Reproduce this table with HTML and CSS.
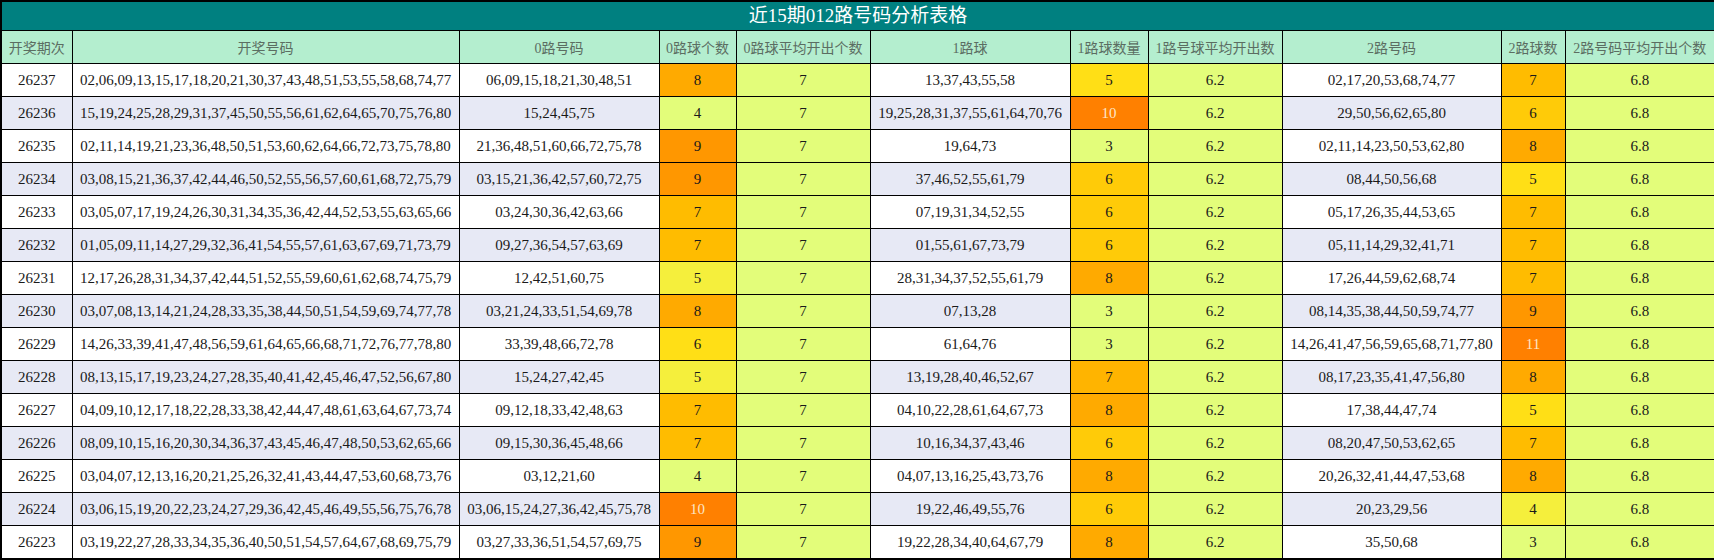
FILE: index.html
```html
<!DOCTYPE html>
<html lang="zh-CN">
<head>
<meta charset="utf-8">
<title>近15期012路号码分析表格</title>
<link rel="stylesheet" href="styles.css">
</head>
<body>
<table class="grid">
  <colgroup>
    <col class="w-period"><col class="w-nums"><col class="w-r0"><col class="w-c0"><col class="w-a0"><col class="w-r1"><col class="w-c1"><col class="w-a1"><col class="w-r2"><col class="w-c2"><col class="w-a2">
  </colgroup>
  <thead>
    <tr class="title-row"><th colspan="11" class="title">近15期012路号码分析表格</th></tr>
    <tr class="head-row">
      <th>开奖期次</th><th>开奖号码</th><th>0路号码</th><th>0路球个数</th><th>0路球平均开出个数</th><th>1路球</th><th>1路球数量</th><th>1路号球平均开出数</th><th>2路号码</th><th>2路球数</th><th>2路号码平均开出个数</th>
    </tr>
  </thead>
  <tbody>
    <tr><td>26237</td><td>02,06,09,13,15,17,18,20,21,30,37,43,48,51,53,55,58,68,74,77</td><td>06,09,15,18,21,30,48,51</td><td class="o2">8</td><td class="avg">7</td><td>13,37,43,55,58</td><td class="y2">5</td><td class="avg">6.2</td><td>02,17,20,53,68,74,77</td><td class="o1">7</td><td class="avg">6.8</td></tr>
    <tr class="alt"><td>26236</td><td>15,19,24,25,28,29,31,37,45,50,55,56,61,62,64,65,70,75,76,80</td><td>15,24,45,75</td><td class="lime">4</td><td class="avg">7</td><td>19,25,28,31,37,55,61,64,70,76</td><td class="o4">10</td><td class="avg">6.2</td><td>29,50,56,62,65,80</td><td class="y3">6</td><td class="avg">6.8</td></tr>
    <tr><td>26235</td><td>02,11,14,19,21,23,36,48,50,51,53,60,62,64,66,72,73,75,78,80</td><td>21,36,48,51,60,66,72,75,78</td><td class="o3">9</td><td class="avg">7</td><td>19,64,73</td><td class="lime">3</td><td class="avg">6.2</td><td>02,11,14,23,50,53,62,80</td><td class="o2">8</td><td class="avg">6.8</td></tr>
    <tr class="alt"><td>26234</td><td>03,08,15,21,36,37,42,44,46,50,52,55,56,57,60,61,68,72,75,79</td><td>03,15,21,36,42,57,60,72,75</td><td class="o3">9</td><td class="avg">7</td><td>37,46,52,55,61,79</td><td class="y3">6</td><td class="avg">6.2</td><td>08,44,50,56,68</td><td class="y2">5</td><td class="avg">6.8</td></tr>
    <tr><td>26233</td><td>03,05,07,17,19,24,26,30,31,34,35,36,42,44,52,53,55,63,65,66</td><td>03,24,30,36,42,63,66</td><td class="o1">7</td><td class="avg">7</td><td>07,19,31,34,52,55</td><td class="y3">6</td><td class="avg">6.2</td><td>05,17,26,35,44,53,65</td><td class="o1">7</td><td class="avg">6.8</td></tr>
    <tr class="alt"><td>26232</td><td>01,05,09,11,14,27,29,32,36,41,54,55,57,61,63,67,69,71,73,79</td><td>09,27,36,54,57,63,69</td><td class="o1">7</td><td class="avg">7</td><td>01,55,61,67,73,79</td><td class="y3">6</td><td class="avg">6.2</td><td>05,11,14,29,32,41,71</td><td class="o1">7</td><td class="avg">6.8</td></tr>
    <tr><td>26231</td><td>12,17,26,28,31,34,37,42,44,51,52,55,59,60,61,62,68,74,75,79</td><td>12,42,51,60,75</td><td class="y1">5</td><td class="avg">7</td><td>28,31,34,37,52,55,61,79</td><td class="o2">8</td><td class="avg">6.2</td><td>17,26,44,59,62,68,74</td><td class="o1">7</td><td class="avg">6.8</td></tr>
    <tr class="alt"><td>26230</td><td>03,07,08,13,14,21,24,28,33,35,38,44,50,51,54,59,69,74,77,78</td><td>03,21,24,33,51,54,69,78</td><td class="o2">8</td><td class="avg">7</td><td>07,13,28</td><td class="lime">3</td><td class="avg">6.2</td><td>08,14,35,38,44,50,59,74,77</td><td class="o3">9</td><td class="avg">6.8</td></tr>
    <tr><td>26229</td><td>14,26,33,39,41,47,48,56,59,61,64,65,66,68,71,72,76,77,78,80</td><td>33,39,48,66,72,78</td><td class="y2">6</td><td class="avg">7</td><td>61,64,76</td><td class="lime">3</td><td class="avg">6.2</td><td>14,26,41,47,56,59,65,68,71,77,80</td><td class="o4">11</td><td class="avg">6.8</td></tr>
    <tr class="alt"><td>26228</td><td>08,13,15,17,19,23,24,27,28,35,40,41,42,45,46,47,52,56,67,80</td><td>15,24,27,42,45</td><td class="y1">5</td><td class="avg">7</td><td>13,19,28,40,46,52,67</td><td class="o1b">7</td><td class="avg">6.2</td><td>08,17,23,35,41,47,56,80</td><td class="o2">8</td><td class="avg">6.8</td></tr>
    <tr><td>26227</td><td>04,09,10,12,17,18,22,28,33,38,42,44,47,48,61,63,64,67,73,74</td><td>09,12,18,33,42,48,63</td><td class="o1">7</td><td class="avg">7</td><td>04,10,22,28,61,64,67,73</td><td class="o2">8</td><td class="avg">6.2</td><td>17,38,44,47,74</td><td class="y2">5</td><td class="avg">6.8</td></tr>
    <tr class="alt"><td>26226</td><td>08,09,10,15,16,20,30,34,36,37,43,45,46,47,48,50,53,62,65,66</td><td>09,15,30,36,45,48,66</td><td class="o1">7</td><td class="avg">7</td><td>10,16,34,37,43,46</td><td class="y3">6</td><td class="avg">6.2</td><td>08,20,47,50,53,62,65</td><td class="o1">7</td><td class="avg">6.8</td></tr>
    <tr><td>26225</td><td>03,04,07,12,13,16,20,21,25,26,32,41,43,44,47,53,60,68,73,76</td><td>03,12,21,60</td><td class="lime">4</td><td class="avg">7</td><td>04,07,13,16,25,43,73,76</td><td class="o2">8</td><td class="avg">6.2</td><td>20,26,32,41,44,47,53,68</td><td class="o2">8</td><td class="avg">6.8</td></tr>
    <tr class="alt"><td>26224</td><td>03,06,15,19,20,22,23,24,27,29,36,42,45,46,49,55,56,75,76,78</td><td>03,06,15,24,27,36,42,45,75,78</td><td class="o4">10</td><td class="avg">7</td><td>19,22,46,49,55,76</td><td class="y3">6</td><td class="avg">6.2</td><td>20,23,29,56</td><td class="y1">4</td><td class="avg">6.8</td></tr>
    <tr><td>26223</td><td>03,19,22,27,28,33,34,35,36,40,50,51,54,57,64,67,68,69,75,79</td><td>03,27,33,36,51,54,57,69,75</td><td class="o3">9</td><td class="avg">7</td><td>19,22,28,34,40,64,67,79</td><td class="o2">8</td><td class="avg">6.2</td><td>35,50,68</td><td class="lime">3</td><td class="avg">6.8</td></tr>
  </tbody>
</table>
</body>
</html>
```
FILE: styles.css
```css
html, body {
  margin: 0;
  padding: 0;
  background: #ffffff;
}

.grid {
  width: 1714px;
  table-layout: fixed;
  border-collapse: collapse;
  font-family: "Liberation Serif", "Noto Sans CJK SC", serif;
  color: #1a1a1a;
  border: 2px solid #000;
}

.w-period { width: 71px; }
.w-nums { width: 387px; }
.w-r0 { width: 200px; }
.w-c0 { width: 77px; }
.w-a0 { width: 134px; }
.w-r1 { width: 200px; }
.w-c1 { width: 78px; }
.w-a1 { width: 134px; }
.w-r2 { width: 219px; }
.w-c2 { width: 64px; }
.w-a2 { width: 150px; }

.grid th,
.grid td {
  border: 1px solid #000;
  padding: 0;
  text-align: center;
  white-space: nowrap;
  overflow: hidden;
}

.title {
  background: #008080;
  color: #ffffff;
  font-size: 19px;
  line-height: 22px;
  font-weight: normal;
  height: 28px;
  border-bottom: 2px solid #000;
}

.head-row th {
  background: #b4eecf;
  color: #5b6d62;
  font-size: 14px;
  font-weight: normal;
  height: 32px;
}

.grid td {
  font-size: 15px;
  height: 32px;
  background: #ffffff;
}

.grid tr.alt td {
  background: #e7e9f5;
}

.grid td.avg,
.grid tr.alt td.avg,
.grid td.lime,
.grid tr.alt td.lime { background: #e3fd7a; }
.grid td.y1,
.grid tr.alt td.y1 { background: #f5ef3c; }
.grid td.y2,
.grid tr.alt td.y2 { background: #ffdf16; }
.grid td.y3,
.grid tr.alt td.y3 { background: #ffcb08; }
.grid td.o1,
.grid tr.alt td.o1 { background: #ffbc00; }
.grid td.o1b,
.grid tr.alt td.o1b { background: #ffb400; }
.grid td.o2,
.grid tr.alt td.o2 { background: #ffaa00; }
.grid td.o3,
.grid tr.alt td.o3 { background: #ff9700; }
.grid td.o4,
.grid tr.alt td.o4 { background: #ff8000; color: #fde6c8; }
```
